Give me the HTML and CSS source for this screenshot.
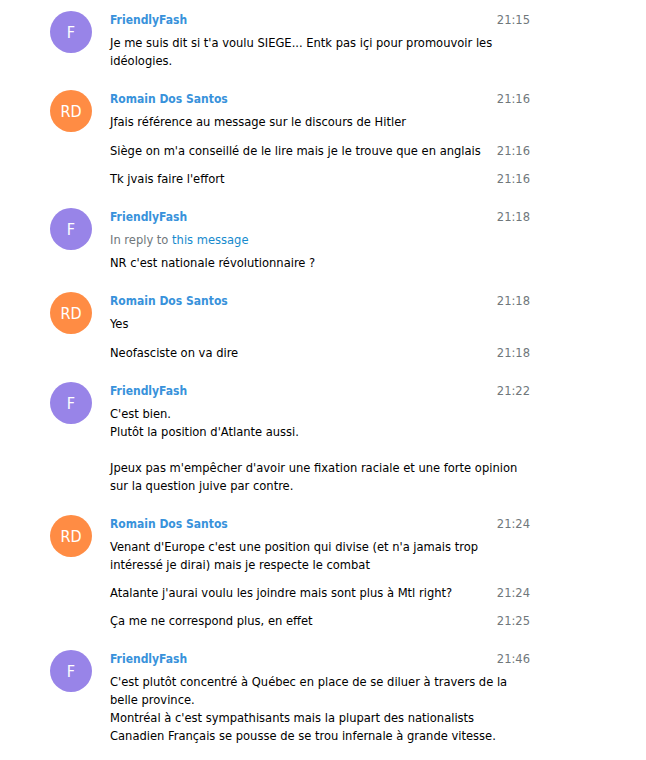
FILE: index.html
```html
<!DOCTYPE html>
<html>
<head>
  <meta charset="utf-8">
  <title>Messages</title>
  <link rel="stylesheet" href="styles.css">
</head>
<body>
  <div class="history">

    <div class="message">
      <div class="userpic purple">F</div>
      <div class="body">
        <div class="date">21:15</div>
        <div class="from-name">FriendlyFash</div>
        <div class="text">Je me suis dit si t'a voulu SIEGE... Entk pas içi pour promouvoir les idéologies.</div>
      </div>
    </div>

    <div class="message">
      <div class="userpic orange">RD</div>
      <div class="body">
        <div class="date">21:16</div>
        <div class="from-name">Romain Dos Santos</div>
        <div class="text">Jfais référence au message sur le discours de Hitler</div>
      </div>
    </div>
    <div class="message joined">
      <div class="body">
        <div class="date">21:16</div>
        <div class="text">Siège on m'a conseillé de le lire mais je le trouve que en anglais</div>
      </div>
    </div>
    <div class="message joined">
      <div class="body">
        <div class="date">21:16</div>
        <div class="text">Tk jvais faire l'effort</div>
      </div>
    </div>

    <div class="message">
      <div class="userpic purple">F</div>
      <div class="body">
        <div class="date">21:18</div>
        <div class="from-name">FriendlyFash</div>
        <div class="reply-to">In reply to <a href="#">this message</a></div>
        <div class="text">NR c'est nationale révolutionnaire ?</div>
      </div>
    </div>

    <div class="message">
      <div class="userpic orange">RD</div>
      <div class="body">
        <div class="date">21:18</div>
        <div class="from-name">Romain Dos Santos</div>
        <div class="text">Yes</div>
      </div>
    </div>
    <div class="message joined">
      <div class="body">
        <div class="date">21:18</div>
        <div class="text">Neofasciste on va dire</div>
      </div>
    </div>

    <div class="message">
      <div class="userpic purple">F</div>
      <div class="body">
        <div class="date">21:22</div>
        <div class="from-name">FriendlyFash</div>
        <div class="text">C'est bien.<br>Plutôt la position d'Atlante aussi.<br><br>Jpeux pas m'empêcher d'avoir une fixation raciale et une forte opinion sur la question juive par contre.</div>
      </div>
    </div>

    <div class="message">
      <div class="userpic orange">RD</div>
      <div class="body">
        <div class="date">21:24</div>
        <div class="from-name">Romain Dos Santos</div>
        <div class="text">Venant d'Europe c'est une position qui divise (et n'a jamais trop intéressé je dirai) mais je respecte le combat</div>
      </div>
    </div>
    <div class="message joined">
      <div class="body">
        <div class="date">21:24</div>
        <div class="text">Atalante j'aurai voulu les joindre mais sont plus à Mtl right?</div>
      </div>
    </div>
    <div class="message joined">
      <div class="body">
        <div class="date">21:25</div>
        <div class="text">Ça me ne correspond plus, en effet</div>
      </div>
    </div>

    <div class="message">
      <div class="userpic purple">F</div>
      <div class="body">
        <div class="date">21:46</div>
        <div class="from-name">FriendlyFash</div>
        <div class="text">C'est plutôt concentré à Québec en place de se diluer à travers de la belle province.<br>Montréal à c'est sympathisants mais la plupart des nationalists Canadien Français se pousse de se trou infernale à grande vitesse.</div>
      </div>
    </div>

  </div>
</body>
</html>
```

FILE: styles.css
```css
body {
  margin: 0;
  background: #fff;
  color: #000;
  font-family: "DejaVu Sans Condensed", "DejaVu Sans", sans-serif;
  font-size: 12.8px;
}

.history {
  width: 480px;
  margin-left: 50px;
  padding-top: 1px;
}

.message {
  display: flex;
  padding: 10px 0;
}

.message.joined {
  margin-top: -10px;
  padding-left: 60px;
}

.userpic {
  flex: none;
  width: 42px;
  height: 42px;
  border-radius: 50%;
  color: #fff;
  font-size: 16px;
  display: flex;
  align-items: center;
  justify-content: center;
  margin-right: 18px;
}

.userpic.purple {
  background: #9884e8;
}

.userpic.orange {
  background: #ff8c44;
}

.body {
  flex: 1;
  min-width: 0;
}

.date {
  float: right;
  color: #70777b;
  line-height: 18px;
  padding-left: 14px;
}

.from-name {
  color: #3892db;
  font-size: 12px;
  font-weight: bold;
  line-height: 18px;
  padding-bottom: 5px;
}

.reply-to {
  color: #70777b;
  line-height: 18px;
  padding-bottom: 5px;
}

.reply-to a {
  color: #168acd;
  text-decoration: none;
}

.text {
  line-height: 18px;
  word-wrap: break-word;
}
```
